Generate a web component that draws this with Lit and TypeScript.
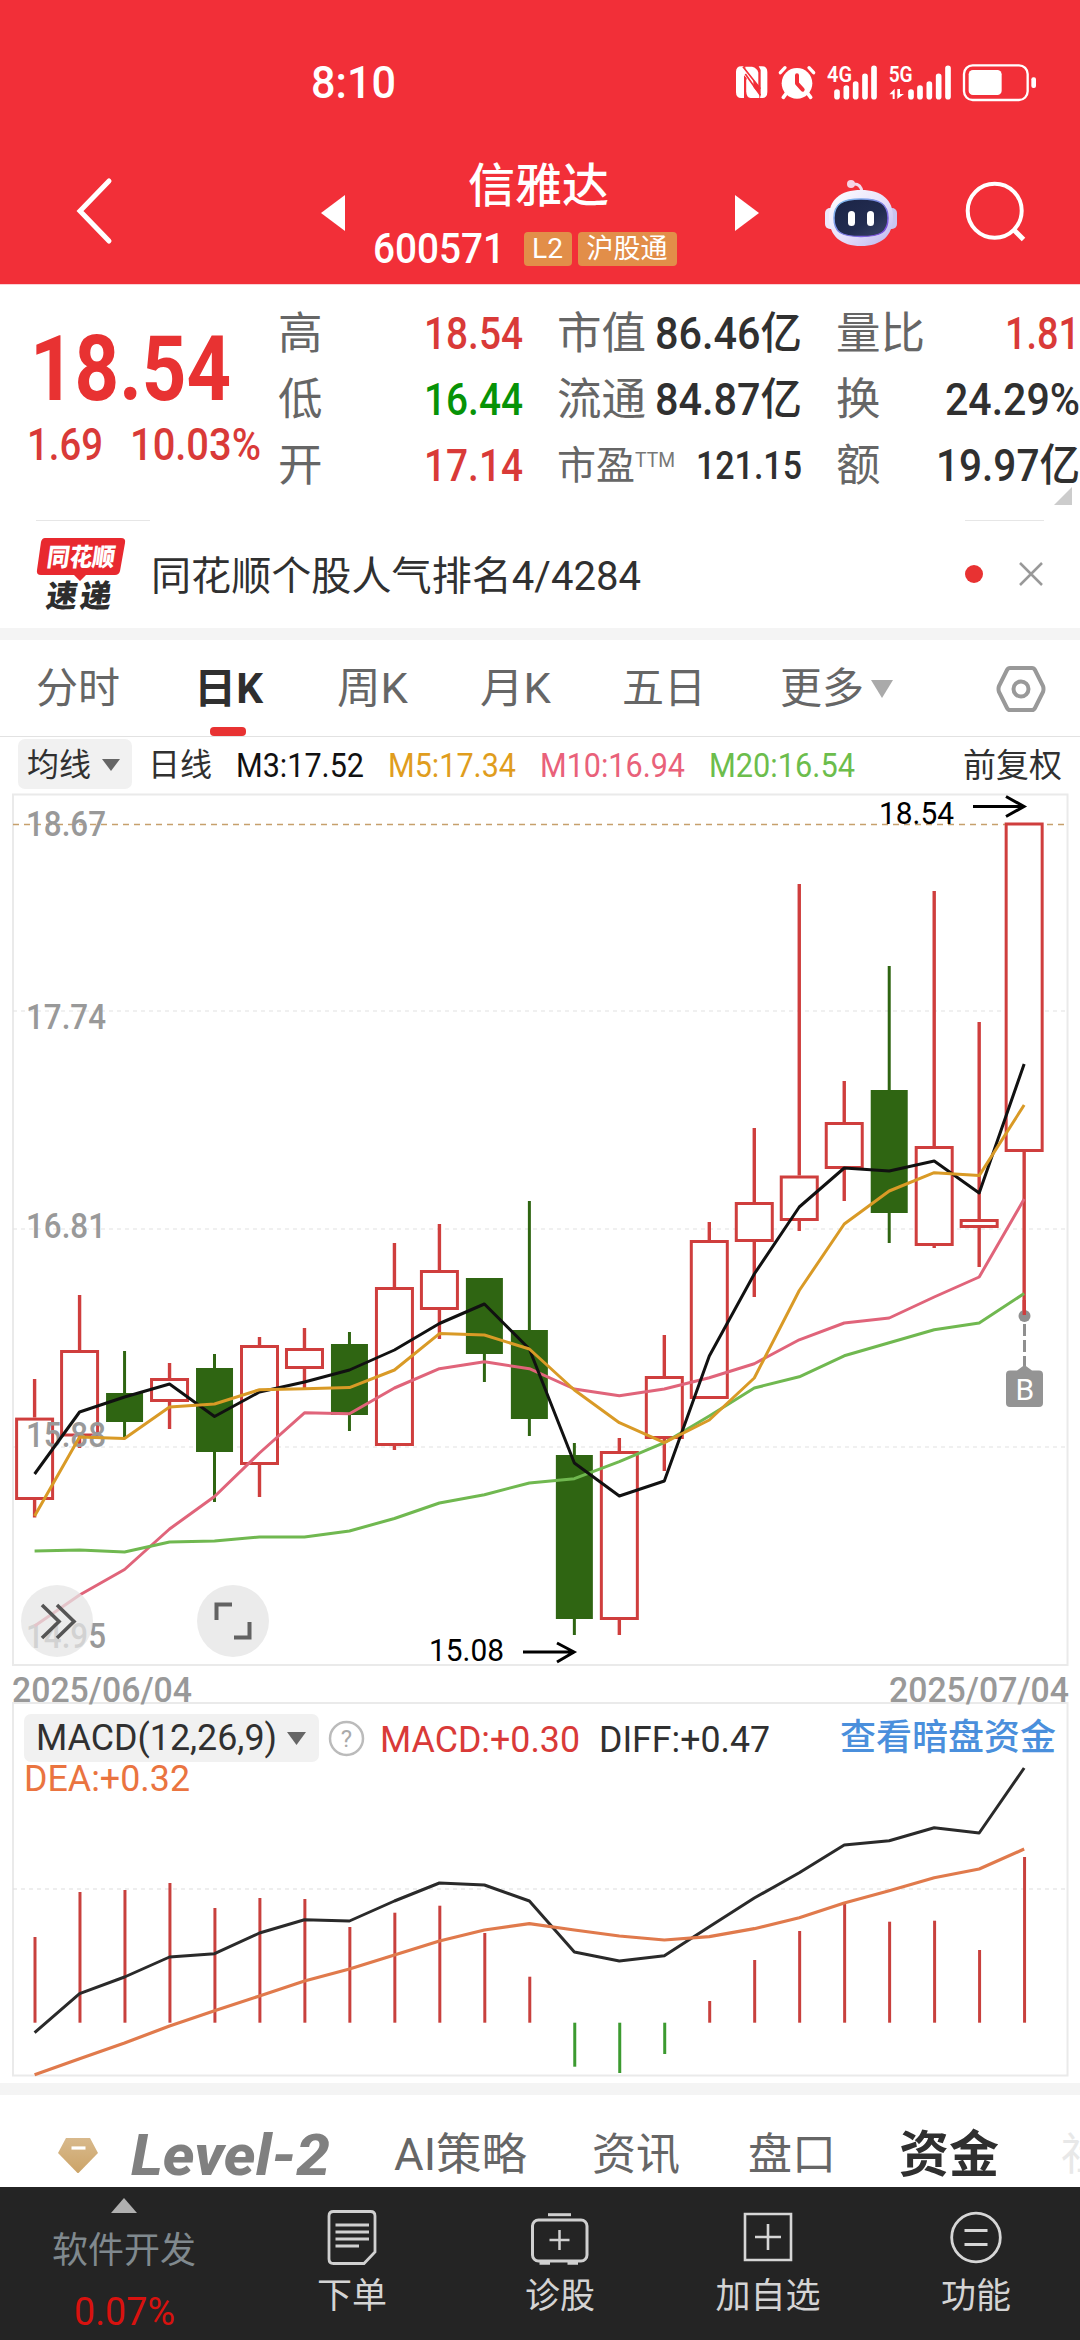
import { LitElement, html, svg, css } from "lit";
import { customElement, property } from "lit/decorators.js";

/** Inline text squeezed or stretched horizontally to a given width. */
@customElement("fit-text")
class FitText extends LitElement {
  @property({ type: Number }) w = 0;
  @property() text = "";
  static styles = css`
    :host { display: inline-block; flex: none; white-space: nowrap; }
    .inner { display: inline-block; transform-origin: 0 50%; }
  `;
  render() {
    return html`<span class="inner">${this.text}</span>`;
  }
  updated() {
    const inner = this.renderRoot.querySelector(".inner") as HTMLElement;
    inner.style.transform = "none";
    this.style.width = "auto";
    const natural = inner.getBoundingClientRect().width;
    if (this.w && natural) {
      inner.style.transform = `scaleX(${this.w / natural})`;
      this.style.width = `${this.w}px`;
    }
  }
}

const X0 = 34.6;
const STEP = 44.98;
const px = (i: number) => X0 + STEP * i;

// [up, high, bodyTop, bodyBottom, low]
const candles: [number, number, number, number, number][] = [
  [1, 1379, 1417.6, 1500, 1517.5],
  [1, 1295, 1350, 1436.5, 1448],
  [0, 1351, 1393, 1422, 1438],
  [1, 1363, 1378, 1402, 1429],
  [0, 1354, 1368, 1452, 1502],
  [1, 1337, 1345, 1465, 1497],
  [1, 1328, 1348, 1369, 1390],
  [0, 1332, 1344, 1415, 1431],
  [1, 1243, 1287, 1446, 1450],
  [1, 1224, 1270, 1310, 1339],
  [0, 1278, 1278, 1354, 1382],
  [0, 1201, 1330, 1419, 1436],
  [0, 1443, 1455, 1619, 1635],
  [1, 1438, 1451, 1620, 1635],
  [1, 1335, 1376, 1439, 1471],
  [1, 1222, 1240, 1399, 1399],
  [1, 1128, 1202, 1242, 1297],
  [1, 884, 1175.5, 1221, 1231],
  [1, 1081, 1122, 1169, 1201],
  [0, 966, 1090, 1213, 1243],
  [1, 891, 1146, 1246, 1248],
  [1, 1022, 1219, 1228, 1267],
  [1, 822.5, 822.5, 1152, 1316],
];

const ma3 = [1474, 1412, 1397, 1384, 1416.5, 1392, 1382, 1370, 1350, 1323.5, 1304, 1349, 1463, 1496, 1481, 1356, 1274, 1207, 1168, 1171, 1161, 1193, 1064];
const ma5 = [1516, 1437, 1438.5, 1407, 1404, 1389.7, 1388.7, 1387.6, 1370, 1333.6, 1335, 1349, 1390, 1422.7, 1442.7, 1420, 1378, 1290.5, 1224, 1191, 1172.7, 1175.6, 1105];
const ma10 = [1626, 1595, 1569.5, 1529, 1496.5, 1453, 1412.8, 1413.8, 1388, 1368.7, 1361.8, 1368.7, 1389, 1395.7, 1389, 1377.7, 1363.7, 1339.8, 1323, 1318, 1297, 1277, 1199];
const ma20 = [1551, 1550, 1552, 1542, 1541, 1537, 1537, 1531, 1518.5, 1503, 1494.7, 1483, 1478.7, 1461.7, 1442.7, 1416, 1388, 1376.8, 1355.8, 1342.7, 1329.7, 1323, 1293.5];

const bars = [1937, 1892, 1890, 1883, 1908, 1898, 1899, 1927, 1912.7, 1905.7, 1933, 1976.7, 2066.7, 2073, 2054, 2001, 1960, 1931, 1903.7, 1921.7, 1920.7, 1950, 1857];
const diff = [2032.7, 1993.7, 1977, 1957, 1953.7, 1933, 1919.7, 1921, 1901, 1883, 1885, 1901, 1952, 1961, 1955.7, 1926.7, 1898, 1872.7, 1845, 1840.7, 1827.7, 1833, 1768];
const dea = [2074.7, 2058.7, 2043, 2026, 2010.7, 1996, 1981, 1969, 1955, 1941, 1930, 1923.7, 1930, 1936, 1940, 1936.7, 1928.7, 1917.7, 1903, 1890.7, 1877.7, 1869, 1849];

const line = (ys: number[], color: string, w = 3) =>
  svg`<polyline points=${ys.map((y, i) => `${px(i)},${y}`).join(" ")} fill="none" stroke=${color} stroke-width=${w} stroke-linejoin="round"/>`;

const candle = ([up, hi, top, bot, lo]: number[], i: number) => {
  const x = px(i);
  return up
    ? svg`<path d="M${x} ${hi}V${top}M${x} ${bot}V${lo}" stroke="#cf3e3d" stroke-width="3.4"/>
        <rect x=${x - 18} y=${top + 1.5} width="36" height=${bot - top - 3} fill="#fff" stroke="#cf3e3d" stroke-width="3"/>`
    : svg`<path d="M${x} ${hi}V${lo}" stroke="#2f6512" stroke-width="3"/>
        <rect x=${x - 18.5} y=${top} width="37" height=${bot - top} fill="#2f6512"/>`;
};

const priceLabels: [string, number][] = [["18.67", 836], ["17.74", 1029], ["16.81", 1238], ["15.88", 1447], ["14.95", 1648]];

const statusIcons = html`<svg class="status-icons" width="310" height="50" viewBox="730 55 310 50">
  <g transform="translate(700 40) scale(.33333)" fill="#fff">
    <path d="M124 73H130L160 110V166L140 150V108L132 100V168H124Q108 168 108 150V90Q108 73 124 73Z"/>
    <path d="M176 73H186Q202 73 202 90V150Q202 168 186 168H180L182 160V84Z"/>
    <path d="M136 74H156Q172 78 175 92V132L136 88Z"/>
    <path d="M139 112L178 156V168H152Q139 166 139 150Z"/>
    <path d="M129 74L181 140M136 96L181 160" stroke="#f22f38" stroke-width="5"/>
    <circle cx="291" cy="124" r="46"/>
    <path d="M262 150L250 166M320 150L332 166" stroke="#fff" stroke-width="11" stroke-linecap="round"/>
    <path d="M241 92L255 77M341 92L327 77" stroke="#fff" stroke-width="10" stroke-linecap="round"/>
    <path d="M291 100V124L308 143" fill="none" stroke="#f22f38" stroke-width="12" stroke-linecap="round" stroke-linejoin="round"/>
    <text x="381" y="120" font-size="66" font-weight="600" textLength="75" lengthAdjust="spacingAndGlyphs">4G</text>
    <text x="566" y="120" font-size="66" font-weight="600" textLength="72" lengthAdjust="spacingAndGlyphs">5G</text>
    <g stroke="#fff" stroke-width="17" stroke-linecap="round">
      <path d="M411 150V164M439 138V164M467 126V164M495 103V164M522 79V164"/>
      <path d="M633 150V164M660 138V164M688 126V164M716 103V164M744 79V164"/>
    </g>
    <path d="M584 171V140L568 157H578V171ZM592 141V171L612 156H600V141Z"/>
    <rect x="792" y="70" width="191" height="104" rx="26" fill="none" stroke="#fff" stroke-width="7"/>
    <rect x="806" y="84" width="99" height="75" rx="13"/>
    <rect x="994" y="106" width="14" height="32" rx="6"/>
  </g>
</svg>`;

const robot = html`<svg width="74" height="70" viewBox="824 175 74 70">
  <defs>
    <linearGradient id="head" x1="0" y1="0" x2="1" y2="1"><stop offset="0" stop-color="#fff"/><stop offset=".55" stop-color="#e6dffa"/><stop offset="1" stop-color="#b9b4ee"/></linearGradient>
    <linearGradient id="face" x1="0" y1="0" x2="1" y2="1"><stop offset="0" stop-color="#1b2446"/><stop offset=".6" stop-color="#222c50"/><stop offset="1" stop-color="#3b4468"/></linearGradient>
    <linearGradient id="rim" x1="0" y1="0" x2="1" y2="1"><stop offset="0" stop-color="#7fc6f0"/><stop offset="1" stop-color="#7a3fd8"/></linearGradient>
  </defs>
  <path d="M852 181Q861 180 862 189" fill="none" stroke="#f3d9ea" stroke-width="3"/>
  <circle cx="851" cy="181" r="4" fill="#f6d3e4"/>
  <rect x="825" y="205" width="12" height="21" rx="5" fill="#eee7fb"/>
  <rect x="885" y="205" width="12" height="21" rx="5" fill="#c9c5f0"/>
  <path d="M861 187C882 187 893 197 893 214C893 233 881 243 861 243C841 243 829 233 829 214C829 197 840 187 861 187Z" fill="url(#head)"/>
  <path d="M861 196C880 196 888 201 888 215C888 229 881 233.500 861 233.500C841 233.500 834 229 834 215C834 201 842 196 861 196Z" fill="url(#face)" stroke="url(#rim)" stroke-width="1.500"/>
  <rect x="848" y="208" width="7" height="15" rx="3.500" fill="#fff"/>
  <rect x="867" y="208" width="7" height="15" rx="3.500" fill="#fff"/>
</svg>`;

const triDown = (w: number, h: number, color: string) =>
  html`<svg width=${w} height=${h} viewBox="0 0 10 10" preserveAspectRatio="none"><path d="M0 0H10L5 10Z" fill=${color}/></svg>`;

@customElement("app-root")
class AppRoot extends LitElement {
  static styles = css`
    :host {
      display: flex; flex-direction: column; width: 1080px; height: 2340px; overflow: hidden;
      background: #fff; color: #303030; line-height: 1;
      font-family: Roboto, "Noto Sans CJK SC", sans-serif;
    }
    * { box-sizing: border-box; }
    svg { display: block; flex: none; }
    .row { display: flex; align-items: center; }
    .sp { justify-content: space-between; }
    .red { color: #d93a38; } .green { color: #079307; }

    .top { height: 285px; background: #f22f38; color: #fff; border-bottom: 1px solid #fbd0d6; }
    .status { height: 109px; padding: 55px 40px 0 311px; }
    .clock { font-size: 45px; font-weight: 500; }
    .header { display: grid; height: 175px; grid-template-columns: 121px 167px 447px 89px 140px 1fr; }
    .header > * { align-self: center; }
    .back { padding-left: 74px; padding-top: 28px; }
    .pl { padding: 33px 0 0 200px; }
    .pr { padding-top: 33px; }
    .title { display: flex; flex-direction: column; align-items: center; padding-left: 57px; }
    .name { font-size: 47px; line-height: 56px; font-weight: 500; padding-top: 34px; margin-left: -3px; }
    .sub { gap: 6px; height: 40px; margin-top: 15px; margin-left: -31px; }
    .code { font-size: 42px; font-weight: 500; margin-right: 13px; }
    .badge { background: #e28e49; border-radius: 4px; height: 34px; display: flex; align-items: center; justify-content: center; font-size: 27px; }
    .b1 { width: 48px; } .b2 { width: 99px; }

    .quote { height: 230px; padding-top: 15px; display: grid; grid-template-columns: 244px 244px 244px 243px; column-gap: 35px; grid-template-rows: 198px; }
    .last { padding-left: 30px; color: #e83232; }
    .price { font-size: 90px; font-weight: 700; height: 140px; display: flex; align-items: center; }
    .chg { height: 10px; gap: 27px; font-size: 44px; margin-left: -3px; color: #d93a38; font-weight: 500; }
    .q { display: grid; grid-template-rows: repeat(3, 66px); font-size: 44px; font-weight: 500; position: relative; }
    .q .row { padding-top: 2px; }
    .q .lab { color: #666; font-size: 44.5px; font-weight: 400; margin-left: -1px; }
    .q .sm { font-size: 39px; }
    .ttm { font-size: 20px; color: #777; font-weight: 400; align-self: flex-start; margin: 16px auto 0 0; }
    .q .n { font-size: 39px; }
    .corner { position: absolute; right: 8px; top: 187px; }

    .news { height: 113px; display: grid; grid-template-columns: 114px 1fr 79px; padding: 5px 36px 0; align-items: start; }
    .edge { border-top: 1px solid #e6e6e6; height: 107px; display: flex; align-items: center; }
    .ntext { height: 113px; display: flex; align-items: center; font-size: 40px; padding-left: 1px; }
    .band { background: #f4f4f4; height: 12px; flex: none; }

    .tabs { height: 97px; border-bottom: 1px solid #e2e2e2; display: grid; grid-template-columns: 158px 143px 143px 142px 158px 215px 1fr; padding-left: 36px; font-size: 42px; font-weight: 400; color: #666; }
    .tab { display: flex; align-items: center; position: relative; gap: 7px; height: 98px; }
    .on { color: #2f2f2f; font-weight: 700; }
    .on::after { content: ""; position: absolute; left: 16px; bottom: 2px; width: 36px; height: 9px; border-radius: 4px; background: #e83232; }

    .ind { height: 54px; padding: 0 18px 0 18px; font-size: 33px; display: flex; align-items: center; }
    .pill { background: #f1f1f1; border-radius: 7px; display: flex; align-items: center; }
    .p1 { width: 114px; height: 50px; padding: 2px 12px 0 9px; justify-content: space-between; font-size: 32px; }
    .c { font-size: 32px; padding-top: 2px; }
    .m { font-weight: 450; padding-top: 3px; }
    .g1 { margin-left: 16px; } .g2 { margin-left: 24px; } .g3 { margin-left: 24px; }
    .fq { margin-left: auto; font-size: 33px; padding-top: 2px; }

    .chart text { font-family: Roboto, sans-serif; }
    .dates { height: 35px; padding: 6px 11px 0 12px; font-size: 35px; color: #999; font-weight: 500; align-items: flex-start; flex: none; }
    .macd { display: grid; height: 381px; flex: none; }
    .macd > * { grid-area: 1 / 1; }
    .mhead { padding: 12px 24px 0 24px; font-size: 36px; }
    .mrow { height: 48px; }
    .p2 { width: 295px; height: 48px; padding: 0 13px 0 12px; justify-content: space-between; }
    .help { margin-left: 9px; }
    .link { margin-left: auto; color: #4a8fdc; font-size: 36px; font-weight: 500; }
    .dea { color: #ea7440; height: 34px; display: flex; align-items: center; }

    .sheet { height: 92px; padding: 28px 0 0 56px; font-size: 44px; color: #666; display: grid; grid-template-columns: 75px 263px 198px 156px 151px 162px 1fr; align-items: center; font-weight: 400; flex: none; }
    .level { font-size: 58px; font-weight: 800; font-style: italic; color: #808080; }
    .big { font-size: 50px; font-weight: 700; color: #2f2f2f; }
    .fade { color: #e8e8e8; white-space: nowrap; }

    .nav { height: 153px; background: #242424; display: grid; grid-template-columns: 248px 208px 208px 208px 208px; color: #d4d4d4; font-size: 35px; flex: none; }
    .item { display: flex; flex-direction: column; align-items: center; padding-top: 20px; }
    .item svg { height: 60px; }
    .item span { margin-top: 11px; height: 36px; display: flex; align-items: center; }
    .sector { display: flex; flex-direction: column; align-items: center; padding-top: 11px; color: #80898e; font-size: 36px; }
    .sname { margin-top: 20px; } .spct { margin-top: 24px; color: #d8120f; font-size: 38px; }
  `;

  render() {
    const t = (text: string, w: number, cls = "") => html`<fit-text class=${cls} .text=${text} .w=${w}></fit-text>`;
    return html`
      <div class="top">
        <div class="row sp status">${t("8:10", 85, "clock")}${statusIcons}</div>
        <div class="header">
          <div class="back"><svg width="40" height="68" viewBox="74 177 40 68"><path d="M109 181L80 211L109 241" fill="none" stroke="#fff" stroke-width="5" stroke-linecap="round"/></svg></div>
          <div class="pl"><svg width="24" height="36" viewBox="0 0 24 36"><path d="M24 0V36L0 18Z" fill="#fff"/></svg></div>
          <div class="title">
            <div class="name">信雅达</div>
            <div class="row sub">${t("600571", 132, "code")}<span class="badge b1">${t("L2", 31)}</span><span class="badge b2">沪股通</span></div>
          </div>
          <div class="pr"><svg width="24" height="36" viewBox="0 0 24 36"><path d="M0 0V36L24 18Z" fill="#fff"/></svg></div>
          <div class="pr">${robot}</div>
          <div class="pr"><svg width="64" height="64" viewBox="964 182 64 64"><circle cx="994.700" cy="211.700" r="27" fill="none" stroke="#fff" stroke-width="4"/><path d="M1014 231L1023.500 240.500" stroke="#fff" stroke-width="5"/></svg></div>
        </div>
      </div>

      <div class="quote">
        <div class="last">
          <div class="price">${t("18.54", 201)}</div>
          <div class="row chg">${t("1.69", 76)}${t("10.03%", 131)}</div>
        </div>
        <div class="q">
          <div class="row sp"><span class="lab">高</span>${t("18.54", 99, "red")}</div>
          <div class="row sp"><span class="lab">低</span>${t("16.44", 99, "green")}</div>
          <div class="row sp"><span class="lab">开</span>${t("17.14", 99, "red")}</div>
        </div>
        <div class="q">
          <div class="row sp"><span class="lab">市值</span>${t("86.46亿", 147)}</div>
          <div class="row sp"><span class="lab">流通</span>${t("84.87亿", 147)}</div>
          <div class="row sp"><span class="lab sm">市盈</span><span class="ttm">${t("TTM", 40)}</span>${t("121.15", 106, "n")}</div>
        </div>
        <div class="q">
          <div class="row sp"><span class="lab">量比</span>${t("1.81", 75, "red")}</div>
          <div class="row sp"><span class="lab">换</span>${t("24.29%", 135)}</div>
          <div class="row sp"><span class="lab">额</span>${t("19.97亿", 144)}</div>
          <svg class="corner" width="18" height="18" viewBox="0 0 18 18"><path d="M18 0V18H0Z" fill="#ccc"/></svg>
        </div>
      </div>

      <div class="news">
        <div class="edge"><svg width="94" height="80" viewBox="36 534 94 80">
          <path d="M45 538H121Q126 538 125 543L120 571Q119 575 115 575H86L80 581L74 575H41Q36 575 37 570L41 542Q42 538 45 538Z" fill="#e8292f"/>
          <text transform="translate(46 566) skewX(-8)" font-size="25" font-weight="900" fill="#fff" textLength="68" lengthAdjust="spacingAndGlyphs">同花顺</text>
          <text transform="translate(45 607) skewX(-8)" font-size="31" font-weight="900" fill="#2d2d2d" textLength="65">速递</text>
        </svg></div>
        <div class="ntext">${t("同花顺个股人气排名4/4284", 490)}</div>
        <div class="edge sp"><svg width="18" height="18" viewBox="0 0 18 18"><circle cx="9" cy="9" r="9" fill="#e83232"/></svg>
          <svg width="26" height="26" viewBox="0 0 26 26"><path d="M2 2L24 24M24 2L2 24" stroke="#999" stroke-width="2.500"/></svg></div>
      </div>
      <div class="band"></div>

      <div class="tabs">
        <div class="tab">分时</div><div class="tab on">${t("日K", 69)}</div><div class="tab">${t("周K", 71)}</div>
        <div class="tab">${t("月K", 71)}</div><div class="tab">五日</div>
        <div class="tab">更多${triDown(22, 18, "#aaa")}</div>
        <div class="tab"><svg width="52" height="52" viewBox="994 662 52 52"><path d="M1009 667H1031Q1033 667 1034 669L1042 685Q1043 688 1042 691L1034 707Q1033 709 1031 709H1009Q1007 709 1006 707L998 691Q997 688 998 685L1006 669Q1007 667 1009 667Z" fill="none" stroke="#999" stroke-width="4"/><circle cx="1020" cy="688" r="7.500" fill="none" stroke="#999" stroke-width="4"/></svg></div>
      </div>

      <div class="ind">
        <div class="pill p1">均线${triDown(18, 12, "#666")}</div>
        <span class="c g1">日线</span>
        <fit-text class="m g2" style="color:#111" .text=${"M3:17.52"} .w=${128}></fit-text>
        <fit-text class="m g3" style="color:#e09d1d" .text=${"M5:17.34"} .w=${128}></fit-text>
        <fit-text class="m g3" style="color:#e9617a" .text=${"M10:16.94"} .w=${145}></fit-text>
        <fit-text class="m g3" style="color:#6cbd4c" .text=${"M20:16.54"} .w=${146}></fit-text>
        <span class="fq">前复权</span>
      </div>

      <svg class="chart" width="1080" height="876" viewBox="0 791 1080 876">
        <rect x="13" y="794.500" width="1054.500" height="870.500" fill="none" stroke="#eaeaea" stroke-width="2"/>
        <path d="M13 1011H1067M13 1229H1067M13 1447H1067" stroke="#e2e2e2" stroke-width="1.200" stroke-dasharray="4 4"/>
        <path d="M13 824.500H1067" stroke="#c6a06c" stroke-width="1.600" stroke-dasharray="6 5"/>
        ${candles.map(candle)}
        ${priceLabels.map(([s, y]) => svg`<text x="26" y=${y} font-size="35" font-weight="500" fill="#999" textLength="80" lengthAdjust="spacingAndGlyphs">${s}</text>`)}
        ${line(ma10, "#e0647a")}${line(ma20, "#70b850")}${line(ma3, "#111")}${line(ma5, "#d99a26")}
        <text x="879" y="824" font-size="31" textLength="75" lengthAdjust="spacingAndGlyphs">18.54</text>
        <text x="429" y="1661" font-size="31" textLength="75" lengthAdjust="spacingAndGlyphs">15.08</text>
        <path d="M973 806.500H1024M1006 796.500L1024 806.500L1006 816.500M523 1652H574M557 1643L574 1652L557 1662" fill="none" stroke="#000" stroke-width="3"/>
        <circle cx="1024.500" cy="1316" r="6" fill="#8f8f8f"/>
        <path d="M1024.300 1300V1315" stroke="#cf3e3d" stroke-width="3.400"/>
        <path d="M1024.500 1324V1366" stroke="#8f8f8f" stroke-width="3" stroke-dasharray="12 4"/>
        <path d="M1010 1370.500H1017L1024.500 1365L1032 1370.500H1039Q1043 1370.500 1043 1374.500V1403Q1043 1407 1039 1407H1010Q1006 1407 1006 1403V1374.500Q1006 1370.500 1010 1370.500Z" fill="#949494"/>
        <text x="1024.800" y="1399.500" font-size="30" font-weight="400" fill="#fff" text-anchor="middle">B</text>
        <circle cx="57" cy="1621" r="36" fill="#e6e6e6" fill-opacity=".75"/>
        <path d="M42 1605L59 1621.500L42 1638M57 1605L74 1621.500L57 1638" fill="none" stroke="#555" stroke-width="3.600"/>
        <circle cx="233" cy="1621" r="36" fill="#ebebeb"/>
        <path d="M232 1604.500H216.500V1620M234 1637.500H249.500V1622" fill="none" stroke="#626262" stroke-width="4"/>
      </svg>

      <div class="row sp dates">${t("2025/06/04", 180)}${t("2025/07/04", 180)}</div>

      <div class="macd">
        <svg class="chart" width="1080" height="381" viewBox="0 1702 1080 381">
          <rect x="13" y="1703" width="1054.500" height="372.500" fill="none" stroke="#eaeaea" stroke-width="2"/>
          <path d="M13 1889H1067" stroke="#ddd" stroke-width="1.200" stroke-dasharray="4 4"/>
          ${bars.map((y, i) => svg`<path d="M${px(i) + 0.4} 2022.700V${y}" stroke=${y > 2022 ? "#3c9a30" : "#c8403d"} stroke-width="3"/>`)}
          ${line(diff, "#2a2a2a")}${line(dea, "#e07a4c", 3.2)}
        </svg>
        <div class="mhead">
          <div class="row mrow">
            <div class="pill p2">${t("MACD(12,26,9)", 241)}${triDown(19, 13, "#666")}</div>
            <svg class="help" width="37" height="37" viewBox="0 0 37 37"><circle cx="18.500" cy="18.500" r="16.500" fill="none" stroke="#bbb" stroke-width="2.500"/><text x="18.500" y="27" font-size="24" fill="#aaa" text-anchor="middle">?</text></svg>
            <fit-text class="red m" style="margin-left:15px" .text=${"MACD:+0.30"} .w=${200}></fit-text>
            <fit-text class="m" style="margin-left:19px" .text=${"DIFF:+0.47"} .w=${171}></fit-text>
            <span class="link">查看暗盘资金</span>
          </div>
          <div class="dea">${t("DEA:+0.32", 166)}</div>
        </div>
      </div>
      <div class="band"></div>

      <div class="sheet">
        <svg width="44" height="40" viewBox="56 2134 44 40"><defs><linearGradient id="gold" x1="0" y1="0" x2="0" y2="1"><stop offset="0" stop-color="#d8b98c"/><stop offset="1" stop-color="#cca468"/></linearGradient></defs><path d="M66 2137H90L98 2152L79 2171.500Q78 2172.500 77 2171.500L58 2152Z" fill="url(#gold)"/><path d="M71.500 2147H85.500" stroke="#fff" stroke-width="3.200"/></svg>
        ${t("Level-2", 199, "level")}
        ${t("AI策略", 133)}<span>资讯</span><span>盘口</span><span class="big">资金</span><span class="fade">社区</span>
      </div>

      <div class="nav">
        <div class="sector">
          <svg width="26" height="15" viewBox="0 0 26 15"><path d="M13 0L26 15H0Z" fill="#b0b0b0"/></svg>
          <span class="sname">软件开发</span>${t("0.07%", 101, "spct")}
        </div>
        <div class="item"><svg width="60" viewBox="322.500 2207 60 60"><path d="M334 2211.500H371Q375.500 2211.500 375.500 2216V2252L364.500 2263.500H334Q329.500 2263.500 329.500 2259V2216Q329.500 2211.500 334 2211.500ZM336 2225H369.500M336 2232H369.500M336 2239H369.500M336 2246H359.500" fill="none" stroke="#d0d0d0" stroke-width="2.800"/></svg><span>下单</span></div>
        <div class="item"><svg width="60" viewBox="530 2207 60 60"><rect x="532.500" y="2220" width="54.500" height="41" rx="6" fill="none" stroke="#d0d0d0" stroke-width="3"/><path d="M548 2214.700H571" stroke="#d0d0d0" stroke-width="3"/><path d="M539.500 2263H550M567.500 2263H578" stroke="#d0d0d0" stroke-width="3.500"/><path d="M549.500 2240H569.500M559.500 2230V2250" stroke="#d0d0d0" stroke-width="2.500"/></svg><span>诊股</span></div>
        <div class="item"><svg width="60" viewBox="737 2207 60 60"><path d="M744 2214H790V2260H744ZM754 2237H780M767 2224V2250" fill="none" stroke="#d6d6d6" stroke-width="2.600"/></svg><span>加自选</span></div>
        <div class="item"><svg width="60" viewBox="945.500 2207 60 60"><circle cx="975.500" cy="2237.500" r="24.300" fill="none" stroke="#d6d6d6" stroke-width="2.800"/><path d="M964 2230.500H987M964 2244.500H987" stroke="#d6d6d6" stroke-width="3"/></svg><span>功能</span></div>
      </div>
    `;
  }
}
